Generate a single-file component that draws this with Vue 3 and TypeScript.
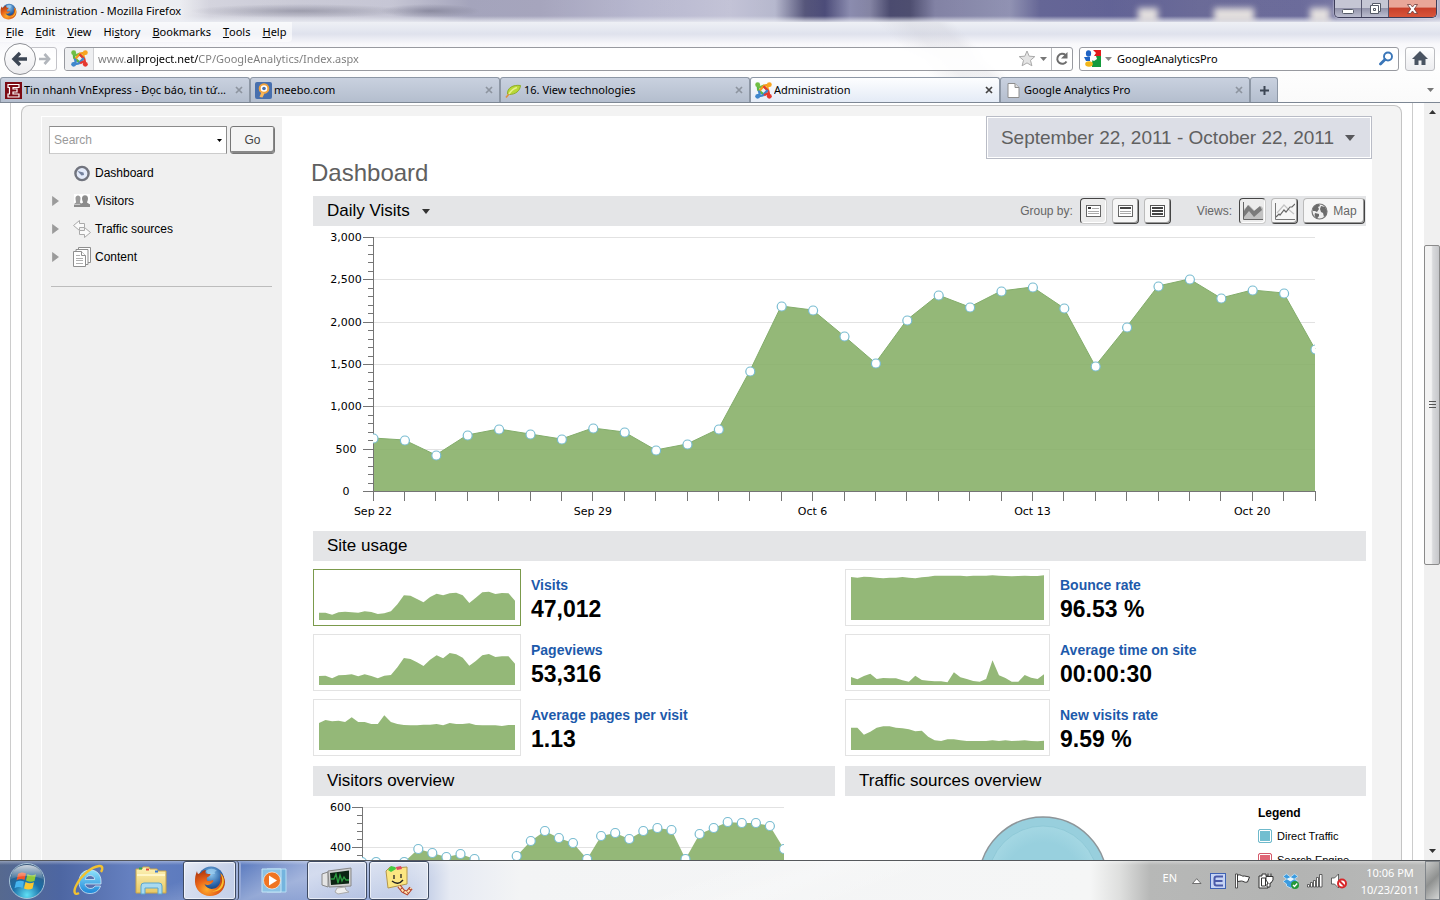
<script setup lang="ts">
import { computed, ref } from 'vue'

interface Tab { title: string; icon: string; active?: boolean }
interface Metric { name: string; value: string; base: number; points: number[]; selected?: boolean }

const menus = [
  ['', 'F', 'ile'], ['', 'E', 'dit'], ['', 'V', 'iew'], ['Hi', 's', 'tory'],
  ['', 'B', 'ookmarks'], ['', 'T', 'ools'], ['', 'H', 'elp'],
]

const tabs: Tab[] = [
  { title: 'Tin nhanh VnExpress - Đọc báo, tin tứ...', icon: 'vn' },
  { title: 'meebo.com', icon: 'meebo' },
  { title: '16. View technologies', icon: 'leaf' },
  { title: 'Administration', icon: 'joomla', active: true },
  { title: 'Google Analytics Pro', icon: 'page' },
]

const nav = [
  { label: 'Dashboard', icon: 'gauge', expandable: false },
  { label: 'Visitors', icon: 'people', expandable: true },
  { label: 'Traffic sources', icon: 'arrows', expandable: true },
  { label: 'Content', icon: 'docs', expandable: true },
]

const url = ref('www.allproject.net/CP/GoogleAnalytics/Index.aspx')
const webSearch = ref('GoogleAnalyticsPro')
const siteSearch = ref('')

const dailyY = [
  212, 214, 229, 209, 203, 208, 213, 202, 206, 224, 218, 203, 145, 80, 84, 110,
  137, 94, 69, 81, 65, 61, 82, 140, 101, 60, 53, 72, 64, 67, 123,
]
const visitorY = [
  66, 66, 75, 66, 53, 57, 61, 58, 63, 80, 80, 60, 45, 35, 42, 47,
  63, 40, 37, 43, 35, 32, 34, 63, 38, 32, 26, 27, 27, 30, 53,
]

function spread(ys: number[], x0: number, x1: number) {
  const step = (x1 - x0) / (ys.length - 1)
  return ys.map((y, i) => ({ x: Math.round((x0 + i * step) * 10) / 10, y }))
}
function areaPath(pts: { x: number; y: number }[], base: number) {
  return `M${pts[0].x},${base} ` + pts.map(p => `L${p.x},${p.y}`).join(' ') + ` L${pts[pts.length - 1].x},${base}Z`
}

const daily = computed(() => spread(dailyY, 60, 1002))
const visitors = computed(() => spread(visitorY, 49, 471))
const dailyLabels = ['3,000', '2,500', '2,000', '1,500', '1,000', '500', '0']
const dailyGrid = [11, 53, 96, 138, 180, 223, 265]
const minorTicks = Array.from({ length: 31 }, (_, i) => Math.round(11 + i * 254 / 30))
const weekLabels = [['Sep 22', 0], ['Sep 29', 7], ['Oct 6', 14], ['Oct 13', 21], ['Oct 20', 28]] as [string, number][]

const metrics: Metric[] = [
  { name: 'Visits', value: '47,012', base: 180, selected: true, points: [158, 158, 164, 157, 155, 157, 158, 154, 156, 162, 160, 154, 133, 106, 107, 117, 127, 111, 101, 106, 100, 98, 106, 129, 113, 97, 95, 102, 99, 100, 122] },
  { name: 'Bounce rate', value: '96.53 %', base: 180, points: [51, 53, 50, 51, 53, 55, 53, 53, 51, 53, 55, 52, 50, 47, 47, 47, 47, 47, 49, 47, 47, 47, 46, 47, 48, 49, 48, 47, 48, 48, 46] },
  { name: 'Pageviews', value: '53,316', base: 375, points: [348, 347, 355, 346, 345, 343, 349, 343, 348, 355, 347, 345, 322, 294, 297, 307, 318, 299, 286, 295, 279, 283, 293, 317, 303, 286, 282, 291, 289, 289, 311] },
  { name: 'Average time on site', value: '00:00:30', base: 375, points: [351, 358, 348, 341, 357, 354, 355, 355, 361, 365, 347, 360, 362, 364, 364, 367, 337, 352, 357, 363, 365, 357, 301, 346, 354, 365, 365, 345, 353, 357, 343] },
  { name: 'Average pages per visit', value: '1.13', base: 570, points: [489, 480, 484, 482, 486, 472, 486, 486, 492, 492, 466, 486, 492, 495, 496, 496, 494, 494, 492, 496, 489, 492, 492, 490, 495, 496, 496, 496, 498, 495, 495] },
  { name: 'New visits rate', value: '9.59 %', base: 570, points: [503, 503, 524, 515, 503, 499, 499, 503, 505, 508, 514, 512, 530, 541, 543, 538, 538, 541, 543, 543, 543, 543, 541, 543, 541, 543, 542, 541, 543, 544, 542] },
]
function spark(m: Metric) {
  return areaPath(spread(m.points.map(p => 45 - Math.round((m.base - p) / 3 * 10) / 10), 0, 196), 45)
}
</script>

<template>
  <div class="screen">
    <svg class="defs" width="0" height="0" aria-hidden="true">
      <defs>
        <radialGradient id="orb" cx=".5" cy=".9" r=".9"><stop offset="0" stop-color="#5fe0f5" /><stop offset=".45" stop-color="#1b6fa8" /><stop offset="1" stop-color="#3b5578" /></radialGradient>
        <linearGradient id="orbTop" x2="0" y2="1"><stop offset="0" stop-color="#fff" stop-opacity=".75" /><stop offset="1" stop-color="#fff" stop-opacity=".1" /></linearGradient>
        <radialGradient id="fox" cx=".4" cy=".75" r=".8"><stop offset="0" stop-color="#ffae2b" /><stop offset=".45" stop-color="#e8641a" /><stop offset="1" stop-color="#a8300c" /></radialGradient>
        <radialGradient id="globe" cx=".5" cy=".3" r=".7"><stop offset="0" stop-color="#8fc8ee" /><stop offset=".6" stop-color="#2a63a8" /><stop offset="1" stop-color="#12305f" /></radialGradient>
        <linearGradient id="ieBlue" x2="0" y2="1"><stop offset="0" stop-color="#8fe2fb" /><stop offset="1" stop-color="#1c86d8" /></linearGradient>
        <linearGradient id="folderY" x2="0" y2="1"><stop offset="0" stop-color="#fdf3b8" /><stop offset="1" stop-color="#e8c864" /></linearGradient>
        <radialGradient id="pieIn" cx=".5" cy=".5" r=".5"><stop offset=".7" stop-color="#98d0de" /><stop offset="1" stop-color="#a4d7e3" /></radialGradient>
        <symbol id="firefox" viewBox="0 0 32 32">
          <circle cx="17" cy="14.5" r="13" fill="url(#globe)" />
          <path d="M12 6c3-3 8-3 11 0-2 0-3 1-2 3-3 0-5 0-6 2-1-2-2-3-3-5z" fill="#9fd2f2" opacity=".7" />
          <path d="M3 6c0 1 .4 2 1 3l3-1c1-2 3-3 5-3-.8 1.300-.8 2.500 0 3.500 1.500.5 3 .6 4.500.6-.3 1.800-1.500 2.400-3.500 3.400-.5 1.500-.2 2.500.5 3.500 2 .4 3.500-.3 5-1 1.300.7 1 2-.2 2.600C16.500 20 13 21 10.500 19c1.500 4.500 7.500 6.500 12 3.500 3.500-2.500 4.500-6 3.500-9.500 1-1 1-3 .2-5C29.500 10 31 13.500 31 17c0 8-6.500 14-15 14C7.500 31 1.200 24.500 1 17 .9 13 1.500 9.500 3 6z" fill="url(#fox)" />
          <path d="M26.200 8c2.500 4.500 2.800 9.500 0 13.500-2 3-5 4.500-8.200 4.700 6.500 1.300 11-3 11.800-8.500.5-3.700-.8-7.200-3.600-9.700z" fill="#fbc02d" />
        </symbol>
        <symbol id="joomla" viewBox="0 0 16 16">
          <g fill="none" stroke-width="2.200" stroke-linejoin="round">
            <path d="M2.500 2.500 3 7.500 8.500 12" stroke="#5ab543" />
            <path d="M2.500 2.500 4.500 5 8 3.500 12 8" stroke="#6fbe44" />
            <path d="M13.500 2.500 8.500 3.500 4 8.500" stroke="#f49b1d" />
            <path d="M13.500 2.500 11.500 5 12.500 8" stroke="#f9a51f" />
            <path d="M13.500 13.500 12.500 8.500 8 4" stroke="#e5382f" />
            <path d="M2.500 13.500 7.500 12.500 12 7.500" stroke="#3f87cd" />
            <path d="M2.500 13.500 4.500 11 3.500 8" stroke="#3f87cd" />
            <path d="M13.500 13.500 11.500 11 8.500 12.500" stroke="#e5382f" />
          </g>
          <circle cx="2.500" cy="2.500" r="2.300" fill="#6fbe44" /><circle cx="13.500" cy="2.500" r="2.300" fill="#f9a51f" />
          <circle cx="13.500" cy="13.500" r="2.300" fill="#e5382f" /><circle cx="2.500" cy="13.500" r="2.300" fill="#3f87cd" />
        </symbol>
      </defs>
    </svg>

    <header class="chrome">
      <div class="titlebar">
        <svg width="17" height="17"><use href="#firefox" /></svg>
        <span class="window-title">Administration - Mozilla Firefox</span>
        <div class="glass-spots" aria-hidden="true"><i /><i class="wide" /><i /></div>
        <div class="window-buttons">
          <button aria-label="Minimize"><svg width="14" height="12"><rect x="1.500" y="6.500" width="11" height="4" rx="1" fill="#fff" stroke="#555a68" /></svg></button>
          <button aria-label="Restore"><svg width="13" height="13"><path d="M3.500 1.500h8v8h-2v2h-8v-8h2z" fill="#fff" stroke="#555a68" /><path d="M3.500 3.500h6v6M4.500 6.500h2v2h-2z" fill="none" stroke="#555a68" /></svg></button>
          <button class="close-window" aria-label="Close"><svg width="13" height="12"><path d="M1.500 1.500h3l2 2.500 2-2.500h3L8.300 6l3.200 4.500h-3l-2-2.500-2 2.500h-3L4.700 6z" fill="#fff" stroke="#6b3a38" stroke-width=".8" /></svg></button>
        </div>
      </div>

      <nav class="menubar" aria-label="Menu">
        <button v-for="m in menus" :key="m[2]">{{ m[0] }}<u>{{ m[1] }}</u>{{ m[2] }}</button>
      </nav>

      <div class="navbar">
        <div class="history">
          <button class="back" aria-label="Back"><svg width="18" height="16"><path d="M9 2 3 8l6 6M3.500 8H16" fill="none" stroke="#3c4654" stroke-width="3.400" /></svg></button>
          <button class="forward" aria-label="Forward"><svg width="13" height="14"><path d="M6.500 2 11 7l-4.500 5M10.500 7H1" fill="none" stroke="#b2b6bc" stroke-width="2.700" /></svg></button>
        </div>
        <div class="urlbar">
          <span class="identity"><svg width="17" height="17"><use href="#joomla" /></svg></span>
          <input v-model="url" class="url" aria-label="Address">
          <button aria-label="Bookmark"><svg width="18" height="17"><path d="M9 1l2.200 5.200 5.600.4-4.300 3.700 1.400 5.500L9 12.900l-4.900 2.900 1.400-5.500L1.200 6.600l5.600-.4z" fill="#e4e4e4" stroke="#aaa" /></svg></button>
          <button aria-label="History list"><svg width="7" height="4"><path d="M0 0h7L3.500 4z" fill="#777" /></svg></button>
          <button class="reload" aria-label="Reload"><svg width="14" height="14"><path d="M11.500 9.500A5 5 0 1 1 10.500 3" fill="none" stroke="#6d6d6d" stroke-width="2" /><path d="M12.500 0v6.500H6z" fill="#6d6d6d" /></svg></button>
        </div>
        <div class="searchbar">
          <svg width="17" height="17"><rect width="17" height="17" fill="#fff" /><path d="M9 0h8v6H9z" fill="#e21b1b" /><path d="M9 6h8v11H8v-4z" fill="#149a3c" /><ellipse cx="4.500" cy="3.500" rx="2.600" ry="3.300" fill="#1e63c4" /><path d="M0 7l6 0 0 4H2z" fill="#1e63c4" /><path d="M7 6h5l1 3-3 2-4-2z" fill="#fff" /><ellipse cx="5" cy="14" rx="3.800" ry="2.800" fill="#f2b71c" /><path d="M9 0l3 3-2 3H8z" fill="#fff" /></svg>
          <button aria-label="Choose engine"><svg width="7" height="4"><path d="M0 0h7L3.500 4z" fill="#888" /></svg></button>
          <input v-model="webSearch" aria-label="Search the web">
          <button aria-label="Search"><svg width="15" height="15"><circle cx="9" cy="5.500" r="4" fill="none" stroke="#3a76b8" stroke-width="1.900" /><path d="M6 8.500 1.500 13" stroke="#3a76b8" stroke-width="2.800" stroke-linecap="round" /></svg></button>
        </div>
        <button class="home" aria-label="Home"><svg width="16" height="15"><path d="M8 0l8 8h-2.500v6H9.500V9.500h-3V14H2.500V8H0z" fill="#4a5462" /></svg></button>
      </div>

      <div class="tabstrip">
        <button v-for="t in tabs" :key="t.title" class="tab" :class="{ active: t.active }">
          <svg v-if="t.icon === 'vn'" width="17" height="17"><rect width="17" height="17" fill="#7c0a14" /><path d="M3 2.500h11v3H8v1.500h4v3H8v2h6v3H3v-3h1.500v-6.500H3z" fill="none" stroke="#fff" stroke-width="1.200" /></svg>
          <svg v-else-if="t.icon === 'meebo'" width="17" height="17"><rect width="17" height="17" rx="2" fill="#476fae" /><circle cx="9" cy="6.500" r="4.300" fill="#fff" stroke="#f2a33c" stroke-width="2" /><circle cx="9" cy="6.500" r="1.800" fill="#476fae" /><path d="M6.500 10 4.500 15l3 .5 2-4z" fill="#f9b75a" /></svg>
          <svg v-else-if="t.icon === 'leaf'" width="17" height="17"><path d="M2.500 12C2 6 8 2.500 15.500 3.500 15 9 10.500 12.500 4 12.500z" fill="#b9d836" stroke="#8fae2c" /><path d="M1 15.500 4 12" fill="none" stroke="#e0903a" stroke-width="1.600" /><path d="M4 12q3-5 8-6.500" fill="none" stroke="#e6f08a" stroke-width="1.500" /></svg>
          <svg v-else-if="t.icon === 'joomla'" width="17" height="17"><use href="#joomla" /></svg>
          <svg v-else width="17" height="17"><path d="M3 1.500h7l4 4v10H3z" fill="#fff" stroke="#8e8e8e" /><path d="M10 1.500v4h4" fill="#ddd" stroke="#8e8e8e" /></svg>
          <span>{{ t.title }}</span>
          <svg class="tab-close" width="8" height="8"><path d="M1 1l6 6M7 1 1 7" :stroke="t.active ? '#444' : '#8d949f'" stroke-width="1.700" /></svg>
        </button>
        <button class="new-tab" aria-label="New tab"><svg width="11" height="11"><path d="M5.500 1v9M1 5.500h9" stroke="#3c4654" stroke-width="2" /></svg></button>
        <button class="all-tabs" aria-label="List all tabs"><svg width="7" height="4"><path d="M0 0h7L3.500 4z" fill="#777" /></svg></button>
      </div>
    </header>

    <div class="viewport">
      <div class="page">
        <div class="shell">
          <aside class="sidebar">
            <form class="search" @submit.prevent>
              <div class="combo">
                <input v-model="siteSearch" placeholder="Search" aria-label="Search reports">
                <button type="button" aria-label="Show suggestions"><svg width="5" height="3"><path d="M0 0h5L2.500 3z" /></svg></button>
              </div>
              <button class="go">Go</button>
            </form>
            <ul class="nav">
              <li v-for="n in nav" :key="n.label">
                <span class="twisty"><svg v-if="n.expandable" width="7" height="10"><path d="M.5 .5v9l6-4.500z" fill="#9b9b9b" stroke="#888" stroke-width=".5" /></svg></span>
                <a href="#">
                  <svg v-if="n.icon === 'gauge'" width="18" height="20"><circle cx="9" cy="10.500" r="6.600" fill="#e4ebfa" stroke="#71747e" stroke-width="2.400" /><path d="M4.500 8 10.500 9.500 11 12 8.500 12.500z" fill="#74829e" /></svg>
                  <svg v-else-if="n.icon === 'people'" width="18" height="20"><rect x="1" y="3" width="16" height="13" fill="#fff" /><path d="M2.500 7c0-3.500 5-3.500 5 0 0 2-.5 3-.5 4.500l2 1.500h-8l2-1.500C3 10 2.500 9 2.500 7z" fill="#9a9a9a" /><path d="M9 7.500c-.3-4.500 6.300-4.500 6 0 0 2-1 3-1 4l3 2v1.500H7V13.500l3-2c0-1-1-2-1-4z" fill="#8c8c8c" /><path d="M1 13.500h16V16H1z" fill="#8c8c8c" /></svg>
                  <svg v-else-if="n.icon === 'arrows'" width="18" height="20"><path d="M6.500 1.500v3h5v4h-5v3l-6-5z" fill="#fafafa" stroke="#aaa" /><path d="M11.500 8.500v3h-5v4h5v3l6-5z" fill="#fafafa" stroke="#aaa" /></svg>
                  <svg v-else width="18" height="20"><g fill="#fff" stroke="#8f8f8f"><path d="M5.500 .5h12v15h-12z" /><path d="M3 2.500h12v15H3z" /><path d="M.5 4.500h8l4 4v11H.5z" /><path d="M8.500 4.500v4h4" /></g><path d="M3 8.500h4M3 11.500h7M3 13.500h7M3 16.500h7" stroke="#b0b0b0" /></svg>
                  {{ n.label }}
                </a>
              </li>
            </ul>
          </aside>

          <main class="report">
            <button class="date-range">September 22, 2011 - October 22, 2011 <svg width="10" height="6"><path d="M0 0h10L5 6z" fill="#58585c" /></svg></button>
            <h1>Dashboard</h1>

            <div class="bar">
              <button class="metric-picker">Daily Visits <svg width="8" height="5"><path d="M0 0h8L4 5z" fill="#333" /></svg></button>
              <div class="tools" role="group" aria-label="Group by">
                <span>Group by:</span>
                <button class="tool on" aria-label="Day"><svg width="15" height="12"><rect x=".5" y=".5" width="14" height="11" fill="#fff" stroke="#666" /><path d="M2 3h3" stroke="#333" stroke-width="2" /><path d="M6 3.500h7M2 6.500h11M2 8.500h11" stroke="#aaa" /></svg></button>
                <button class="tool" aria-label="Week"><svg width="15" height="12"><rect x=".5" y=".5" width="14" height="11" fill="#fff" stroke="#666" /><path d="M2 3h11" stroke="#444" stroke-width="2" /><path d="M2 6.500h11M2 8.500h11" stroke="#aaa" /></svg></button>
                <button class="tool" aria-label="Month"><svg width="15" height="12"><rect x=".5" y=".5" width="14" height="11" fill="#fff" stroke="#555" /><path d="M2 3h11M2 6h11M2 9h11" stroke="#444" stroke-width="2" /></svg></button>
              </div>
              <div class="tools" role="group" aria-label="Views">
                <span>Views:</span>
                <button class="tool on" aria-label="Area chart"><svg width="20" height="18"><path d="M1 17V7l5-4 6 6 6-5 2 2v11z" fill="#c2c2c2" /><path d="M1 9l4-6 6 6 6-5 2 4-8 7-5-6-5 6z" fill="#7b7b7b" /><path d="M.5 0v17.500H20" fill="none" stroke="#666" /></svg></button>
                <button class="tool" aria-label="Line chart"><svg width="20" height="18"><path d="M2 11l7-8 4 4 6 5" fill="none" stroke="#c4c4c4" stroke-width="1.200" /><path d="M1 15l3-3 1 1 4-5 2 2 4-5 2 0 3-3" fill="none" stroke="#666" stroke-width="1.200" /><path d="M.5 1v16.500H20" fill="none" stroke="#777" /></svg></button>
                <button class="tool map"><svg width="17" height="17"><circle cx="8.500" cy="8.500" r="7.500" fill="#eee" stroke="#777" stroke-width="1.200" /><path d="M2 5c2-3 4-4 6-4l1 2-2 1 1 2-2 3-2-1-2 0zM4 10l4 1 0 2-2 2.500c-2-1-3-3-2-5.500zM10 3l4 1 2 4-1 4-2 2-1-4-2-1-1-3z" fill="#6b6b6b" /></svg>Map</button>
              </div>
            </div>

            <svg class="chart" viewBox="0 0 1053 305" role="img" aria-label="Daily visits">
              <path v-for="y in dailyGrid.slice(0, 6)" :key="y" :d="`M60 ${y}.5H1002`" stroke="#e2e2e2" />
              <path :d="areaPath(daily, 265)" fill="#84ad64" fill-opacity=".87" />
              <polyline :points="daily.map(p => `${p.x},${p.y}`).join(' ')" fill="none" stroke="#83ad6b" />
              <g stroke="#757575">
                <path d="M60.500 11V265M50 265.500H1002" />
                <path v-for="y in minorTicks" :key="y" :d="`M55 ${y}.5H60`" />
                <path v-for="y in dailyGrid" :key="y" :d="`M50 ${y}.5H60`" />
                <path v-for="p in daily" :key="p.x" :d="`M${Math.floor(p.x)}.5 265V275`" />
              </g>
              <clipPath id="dailyClip"><rect x="60" y="0" width="942" height="300" /></clipPath>
              <g clip-path="url(#dailyClip)" fill="#fff" stroke="#79bcd1" stroke-width="1.200">
                <circle v-for="p in daily" :key="p.x" :cx="p.x + .5" :cy="p.y + .5" r="4.500" />
              </g>
              <text v-for="(l, i) in dailyLabels" :key="l" x="33" :y="dailyGrid[i] + 4" text-anchor="middle">{{ l }}</text>
              <text v-for="[l, i] in weekLabels" :key="l" :x="daily[i].x" y="289" text-anchor="middle">{{ l }}</text>
            </svg>

            <h2 class="bar">Site usage</h2>
            <div class="metrics">
              <a v-for="m in metrics" :key="m.name" href="#" class="metric">
                <span class="thumb" :class="{ selected: m.selected }">
                  <svg viewBox="0 0 196 45" preserveAspectRatio="none" aria-hidden="true"><path :d="spark(m)" fill="#94b878" /></svg>
                </span>
                <span class="figures"><b>{{ m.name }}</b><strong>{{ m.value }}</strong></span>
              </a>
            </div>

            <div class="overviews">
              <section>
                <h2 class="bar">Visitors overview</h2>
                <svg class="chart" viewBox="0 0 522 140" role="img" aria-label="Visitors overview">
                  <path d="M49 11.500H471M49 51.500H471M49 91.500H471" stroke="#e2e2e2" />
                  <path :d="areaPath(visitors, 131)" fill="#84ad64" fill-opacity=".87" />
                  <g stroke="#757575">
                    <path d="M49.500 11V131M39 11.500H49M39 51.500H49M39 91.500H49" />
                    <path v-for="i in 14" :key="i" :d="`M44 ${11 + i * 8}.5H49`" />
                  </g>
                  <clipPath id="visitorClip"><rect x="49" y="0" width="422" height="140" /></clipPath>
                  <g clip-path="url(#visitorClip)" fill="#fff" stroke="#79bcd1" stroke-width="1.200">
                    <circle v-for="p in visitors" :key="p.x" :cx="p.x" :cy="p.y" r="4.500" />
                  </g>
                  <text x="17" y="15">600</text><text x="17" y="55">400</text>
                </svg>
              </section>
              <section>
                <h2 class="bar">Traffic sources overview</h2>
                <div class="sources">
                  <svg viewBox="0 0 413 160" role="img" aria-label="Traffic sources">
                    <circle cx="198" cy="85" r="64" fill="#98cfdd" stroke="#8d9599" stroke-width="1.500" />
                    <circle cx="198" cy="85" r="55" fill="url(#pieIn)" stroke="#88c4d3" stroke-width=".7" />
                  </svg>
                  <div class="legend">
                    <b>Legend</b>
                    <span class="direct"><i />Direct Traffic</span>
                    <span class="engine"><i />Search Engine</span>
                  </div>
                </div>
              </section>
            </div>
          </main>
        </div>
      </div>

      <div class="scrollbar" aria-hidden="true">
        <svg width="7" height="4"><path d="M0 4h7L3.500 0z" fill="#333" /></svg>
        <div class="track"><div class="thumb-bar"><svg width="7" height="8"><path d="M0 .5h7M0 3.500h7M0 6.500h7" stroke="#555" /></svg></div></div>
        <svg width="7" height="4"><path d="M0 0h7L3.500 4z" fill="#333" /></svg>
      </div>
    </div>

    <footer class="taskbar">
      <button class="task start" aria-label="Start">
        <svg width="38" height="38"><circle cx="19" cy="19" r="17.500" fill="url(#orb)" stroke="#a8c4d8" />
          <path d="M10 12c3-2 5-2 8-.5l-1.500 6.500c-2.500-1.300-5-1.300-8 .3z" fill="#f0562a" /><path d="M19.500 12c3 1.500 5.500 1.500 8.500.3L26.500 19c-3 1.300-5.500 1-8.500-.5z" fill="#8fc93a" /><path d="M8 19.800c3-1.500 5.500-1.500 8-.2L14.500 26c-2.500-1.300-5-1.300-8 .2z" fill="#46b4ee" /><path d="M17.500 20c3 1.500 5.500 1.500 8.500.3l-1.500 6.300c-3 1.300-5.500 1.200-8.500-.2z" fill="#fbc72e" />
          <path d="M3 17C3 8 10 3 19 3s16 5 16 14c-10-4-22-4-32 0z" fill="url(#orbTop)" />
        </svg>
      </button>
      <button class="task quick" aria-label="Internet Explorer">
        <svg width="34" height="34"><path d="M7 18C7 10 12 6 18.500 6S29 11 29 17v3H13c.5 5 8 6 10 2h5.500c-1.500 5-5.500 7.500-10.500 7.500C11.500 29.500 7 25 7 18zm6.300-2.500h9.400c0-5-8.700-5.500-9.400 0z" fill="url(#ieBlue)" stroke="#e4f6ff" stroke-width=".7" /><path d="M7 29c-5 3-6-2-2-9C9 12 19 3 27 2c4-.5 4 3 2 6" fill="none" stroke="#f2c230" stroke-width="2.400" /></svg>
      </button>
      <button class="task quick" aria-label="Explorer">
        <svg width="34" height="32"><path d="M2 4h6l1-2h6l1 2h7l1 2h8v22H2z" fill="url(#folderY)" stroke="#c9a54a" /><path d="M5 3.500h3" stroke="#35a84a" stroke-width="2" /><path d="M12 4.500h3" stroke="#e04a3a" stroke-width="2" /><path d="M21 6.500h3" stroke="#3a78d0" stroke-width="2" /><path d="M3 10h28" stroke="#fff6c8" stroke-width="2" /><path d="M7 29V21q0-3 3-3h15q3 0 3 3v8h-4v-6H11v6z" fill="#a9daf0" stroke="#5aa6cf" /></svg>
      </button>
      <button class="task open stacked" aria-label="Firefox"><svg width="32" height="32"><use href="#firefox" /></svg></button>
      <button class="task quick media" aria-label="Media Player">
        <svg width="28" height="26"><path d="M6 1h19v23H6z" fill="#74b4de" stroke="#b6def4" /><path d="M1 1h19v23H1z" fill="#8cc2e4" stroke="#c3e4f6" /><circle cx="11" cy="12.500" r="8.500" fill="#ef7422" stroke="#fff" stroke-width=".6" /><path d="M8 7.500v10l8-5z" fill="#fff" /></svg>
      </button>
      <button class="task open" aria-label="Task Manager">
        <svg width="32" height="30"><path d="M1 8l6-2v15l-6-2z" fill="#e4e4e4" stroke="#888" /><path d="M7 5 30 2v18L8 21z" fill="#cfcfcf" stroke="#888" /><path d="M9 7l19-2.500V17.500L10 19z" fill="#0b2413" /><path d="M10 13h3l2-5 2 9 2-8 2 6 2-4 2 3h3" fill="none" stroke="#2a9a3e" stroke-width="1.300" /><path d="M16 22l8-1 1 3 3 2-11 2-3-2z" fill="#eee" stroke="#aaa" /></svg>
      </button>
      <button class="task open smile" aria-label="Folder Guard">
        <svg width="32" height="34"><path d="M3 7l4-4 5 1 12-1v17L5 24z" fill="#fbe682" stroke="#b4964a" /><path d="M5 6l3-4 4 1 1 2-5 3z" fill="#42cc40" /><path d="M13 3l5-1 1 3-5 1z" fill="#e04860" /><path d="M11 11v4M18 10v4M9 17q6 5 11-1" fill="none" stroke="#222" stroke-width="1.300" /><path d="M16 22l4 5 4 2 4-5" fill="none" stroke="#b5402a" stroke-width="4" /><path d="M16 22l4 5 4 2 4-5" fill="none" stroke="#ffe4b0" stroke-width="2" stroke-dasharray="3 1" /></svg>
      </button>

      <div class="tray">
        <span class="lang">EN</span>
        <svg width="10" height="6"><path d="M.5 5.500h8.500L4.700 .7z" fill="#fff" stroke="#555" stroke-width=".8" /></svg>
        <svg width="16" height="16"><rect x=".5" y=".5" width="15" height="15" fill="#c6d4f4" stroke="#3f62b4" /><path d="M13 3.500H6.500Q4.500 3.500 4.500 5.500v5q0 2 2 2H13M4.500 8h8" fill="none" stroke="#4a5aa8" stroke-width="2" /></svg>
        <svg width="16" height="16"><path d="M1.500 1h2v14h-2z" fill="#fff" stroke="#333" stroke-width=".8" /><path d="M3.500 2c4-1 4 2 7 1l5 1-2 5c-3 1-4-1-6-1l-4 .5z" fill="#fff" stroke="#333" /></svg>
        <svg width="16" height="16"><path d="M1 3h3V1h4v2h2v12H1z" fill="#fff" stroke="#333" /><path d="M3.500 5h4v8h-4z" fill="none" stroke="#333" /><path d="M8 3.500h7V7l-2 3h-1v4H9v-3h1V10L8 7zM10 3.500v-3M13 3.500v-3" fill="#fff" stroke="#333" /></svg>
        <svg width="17" height="16"><path d="M4.500 1 8.500 4l4-3L16 3.500 12.500 6 16 8.500 12.500 11v2l-4 2-4-2v-2L1 8.500 4.500 6 1 3.500z" fill="#3b9be0" stroke="#d3ecfb" stroke-width=".7" /><path d="M4.500 6l4-2 4 2-4 2.500z" fill="#e6f5fe" /><circle cx="13" cy="12" r="4" fill="#25983a" /><path d="M11 12l1.500 1.500L15.200 10.500" fill="none" stroke="#fff" stroke-width="1.300" /></svg>
        <svg width="16" height="14"><g fill="#fff" stroke="#444" stroke-width=".8"><path d="M.5 10.500h2v2.500h-2zM3.500 8.500h2v4.500h-2zM6.500 6.500h2v6.500h-2zM9.500 3.500h2v9.500h-2zM12.500 .5h2.500v12.500h-2.500z" /></g></svg>
        <svg width="16" height="16"><path d="M.5 5h3l4-4v14l-4-4h-3z" fill="#fff" stroke="#444" stroke-width=".8" /><circle cx="11" cy="10.500" r="4" fill="#fff" stroke="#d8272a" stroke-width="2" /><path d="M8.500 8l5 5" stroke="#d8272a" stroke-width="2" /></svg>
        <time>10:06 PM<br>10/23/2011</time>
        <button class="show-desktop" aria-label="Show desktop" />
      </div>
    </footer>
  </div>
</template>

<style>
body { margin: 0; overflow: hidden; }
</style>

<style scoped>
.screen { display: flex; flex-direction: column; height: 100vh; overflow: hidden; background: #fff; color: #000; font: 12px/16px "Liberation Sans", Arial, sans-serif; }
.screen * { box-sizing: border-box; }
.defs { position: absolute; }
button { margin: 0; padding: 0; border: 0; background: none; color: inherit; font: inherit; display: inline-flex; align-items: center; justify-content: center; }
input { margin: 0; padding: 0; border: 0; background: none; color: inherit; font: inherit; min-width: 0; outline: none; }
a { color: inherit; text-decoration: none; }
svg { display: block; flex: none; }
h1, h2 { margin: 0; font-weight: normal; }

/* browser window */
.chrome { flex: none; font: 11px/16px "Noto Sans", "Open Sans", sans-serif;
  background:
    linear-gradient(45deg, transparent 62%, rgba(190,190,198,.22) 64%, rgba(200,200,208,.25) 66%, transparent 67%),
    linear-gradient(#fff 0, #eceef4 24px, #dfe2ed 34px, #f8f8fb 44px, #fff 60px, #fafafa 100%); }
.titlebar { display: flex; align-items: center; gap: 4px; height: 22px; overflow: hidden;
  background:
    linear-gradient(rgba(255,255,255,.1) 0 16px, rgba(236,238,244,.85) 22px),
    radial-gradient(ellipse 110px 7px at 300px 11px, rgba(105,105,125,.55), transparent),
    radial-gradient(ellipse 50px 7px at 430px 11px, rgba(95,95,120,.6), transparent),
    linear-gradient(90deg, #eceef2 0, #eaebf0 180px, #cfcfda 210px, #c4c4d2 300px, #c0c0d0 390px, #9a9ab4 470px, #9c9bb6 540px, #b0b0ca 640px, #bcbcd2 730px, #aeb0c8 775px, #43436c 805px, #38386a 825px, #7e7fa6 850px, #767699 870px, #37375f 890px, #3a3a60 910px, #74749a 935px, #8486aa 1010px, #54558a 1040px, #50518a 1110px, #5a5a8c 1200px, #5b5b90 1300px, #7f7fa8 1400px, #a9a9c4 100%); }
.window-title { text-shadow: 0 0 6px #fff, 0 0 8px #fff; white-space: nowrap; }
.glass-spots { display: flex; align-items: center; gap: 56px; height: 22px; padding-top: 8px; margin-left: auto; filter: blur(3px); }
.glass-spots i { width: 20px; height: 14px; background: #f1ece6; opacity: .9; }
.glass-spots .wide { width: 40px; }
.window-buttons { display: flex; align-self: flex-start; height: 18px; margin-right: 3px; border: 1px solid #3c3c58; border-top: 0; border-radius: 0 0 5px 5px; overflow: hidden; box-shadow: 0 0 2px #fff; }
.window-buttons button { width: 27px; border-right: 1px solid #55556e; background: linear-gradient(#c5c6d4 0 45%, #9293aa 50%, #bcbdd0); }
.window-buttons .close-window { width: 47px; border: 0; background: linear-gradient(#e9a698 0 40%, #c8402b 50%, #d9553a); }
.menubar { display: flex; gap: 12px; width: max-content; height: 20px; padding: 0 6px; align-items: center; background: rgba(255,255,255,.6); border-radius: 0 0 4px 0; }
.navbar { display: flex; align-items: center; gap: 6px; height: 33px; padding: 0 5px 0 4px; }
.history { display: flex; align-items: center; margin-right: 1px; }
.back { width: 32px; height: 32px; border: 1px solid #8e9095; border-radius: 50%; background: linear-gradient(#fff, #ececef); z-index: 1; }
.forward { width: 26px; height: 24px; margin-left: -5px; border: 1px solid #c3c3c8; border-radius: 0 3px 3px 0; background: rgba(255,255,255,.6); }
.urlbar, .searchbar { display: flex; align-items: center; height: 24px; border: 1px solid #989aa0; border-radius: 3px; background: rgba(255,255,255,.85); }
.urlbar { flex: 1; gap: 4px; }
.identity { display: flex; align-items: center; justify-content: center; align-self: stretch; width: 29px; border-right: 1px solid #cfd0d3; background: #eeeff1; border-radius: 2px 0 0 2px; }
.url { flex: 1; height: 18px; color: transparent; background: linear-gradient(90deg, #7a7a7a 0 29px, #000 29px 100px, #7a7a7a 100px); background-clip: text; -webkit-background-clip: text; }
.reload { align-self: stretch; width: 21px; border-left: 1px solid #b9babd; }
.searchbar { width: 320px; padding: 0 4px; gap: 4px; }
.searchbar input { flex: 1; margin-left: 1px; }
.home { width: 30px; height: 24px; border: 1px solid #bcbdc1; border-radius: 3px; background: linear-gradient(#fff, #ededf0); }
.tabstrip { display: flex; height: 28px; padding-top: 2px; border-bottom: 1px solid #7d8794; }
.tab { flex: 0 1 250px; min-width: 0; padding: 0 6px 0 4px; gap: 2px; border: 1px solid #8d97a5; border-bottom: 0; border-radius: 3px 3px 0 0; background: linear-gradient(#c9d1df, #b4bece); white-space: nowrap; }
.tab.active { background: linear-gradient(#fdfeff, #e4ebf6); }
.tab span { flex: 1; text-align: left; overflow: hidden; }
.new-tab { width: 28px; border: 1px solid #8d97a5; border-bottom: 0; border-radius: 3px 3px 0 0; background: linear-gradient(#c9d1df, #b4bece); }
.all-tabs { margin-left: auto; width: 20px; }

/* page */
.viewport { flex: 1; display: flex; min-height: 0; overflow: hidden; }
.page { flex: 1; min-width: 0; height: max-content; margin: 0 11px 0 10px; padding: 2px 10px 0; border: solid #ccc; border-width: 0 1px; }
.shell { display: flex; padding: 10px 29px 0 19px; border: 1px solid #c4c4c4; border-bottom: 0; border-radius: 8px 8px 0 0; background: #f3f3f3; }
.sidebar { flex: none; width: 241px; padding: 9px 7px 0 7px; border: solid #fff; border-width: 1px 0 0 1px; background: #f0f0f0; }
.search { display: flex; gap: 3px; height: 28px; }
.combo { display: flex; flex: 1; min-width: 0; padding-left: 4px; border: 1px solid #8b8b8b; border-left-color: #bbb; border-bottom-color: #ccc; background: #fff; }
.combo input { flex: 1; }
.combo input::placeholder { color: #9a9a9a; opacity: 1; }
.combo button { width: 13px; }
.go { width: 45px; border: 1px solid #777; border-radius: 3px; background: #f4f4f4; box-shadow: inset -1px -2px 0 #888; color: #444; }
.nav { list-style: none; margin: 5px 3px 0 2px; padding: 0 0 15px; border-bottom: 1px solid #bcbcbc; }
.nav li { display: flex; align-items: center; height: 28px; }
.nav a { display: flex; align-items: center; gap: 4px; }
.twisty { width: 22px; padding-left: 1px; }
.report { flex: 1; min-width: 0; display: flex; flex-direction: column; padding: 0 6px 0 31px; background: #fff; }
.date-range { align-self: flex-end; gap: 11px; height: 43px; margin-right: -6px; padding: 0 16px 0 14px; border: 1px solid #b9bcc6; box-shadow: inset 0 0 0 1px #fff; background: #dcdee6; color: #606060; font-size: 19px; white-space: nowrap; }
h1 { height: 37px; margin-left: -2px; color: #606060; font-size: 24px; line-height: 28px; }
.bar { display: flex; align-items: center; height: 30px; padding: 0 1px 0 14px; background: #e4e5e7; font-size: 17px; line-height: 20px; white-space: nowrap; }
.metric-picker { gap: 12px; margin-right: auto; }
.tools { display: flex; align-items: center; gap: 5px; margin-left: 26px; color: #666; font-size: 12px; }
.tools span { margin-right: 2px; }
.tool { width: 27px; height: 26px; border: 1px solid #bbb; border-right-color: #444; border-bottom-color: #444; border-radius: 4px; box-shadow: inset -1px -1px 0 #999; background: #f6f6f6; }
.tool.on { border-color: #444 #ccc #ccc #444; box-shadow: inset -1px -1px 0 #fff; background: #ececec; }
.tool.map { width: 62px; gap: 5px; }
.chart { width: 100%; height: auto; }
.chart text { font: 11px "DejaVu Sans", Verdana, sans-serif; }
.metrics { display: grid; grid-template-columns: 532fr 521fr; gap: 8px 0; padding: 8px 0 10px; }
.metric { display: flex; gap: 10px; }
.thumb { display: block; width: 208px; height: 57px; padding: 5px; border: 1px solid #e3e3e3; }
.metric:nth-child(even) .thumb { width: 205px; }
.thumb.selected { border-color: #7b9a4c; }
.thumb svg { width: 100%; height: 45px; }
.figures b { display: block; margin-top: 8px; color: #1d5aab; font-size: 14px; line-height: 16px; }
.figures strong { display: block; font-size: 23px; line-height: 32px; }
.overviews { display: grid; grid-template-columns: 522fr 521fr; gap: 10px; }
.sources { display: flex; }
.sources > svg { flex: 1; min-width: 0; }
.legend { display: flex; flex-direction: column; gap: 8px; width: 108px; padding-top: 10px; }
.legend b { line-height: 14px; }
.legend span { display: flex; align-items: center; gap: 5px; font-size: 11px; line-height: 16px; white-space: nowrap; }
.legend i { width: 14px; height: 14px; border: 1px solid; border-radius: 2px; box-shadow: inset 0 0 0 1px #fff; }
.legend .direct i { border-color: #6fb9cb; background: #72bed0; }
.legend .engine i { border-color: #d45a6a; background: #df6676; }
.scrollbar { flex: none; display: flex; flex-direction: column; align-items: center; width: 16px; padding: 7px 0; background: #f0f0f0; }
.track { flex: 1; width: 100%; padding-top: 131px; }
.thumb-bar { display: flex; align-items: center; justify-content: center; height: 53%; border: 1px solid #8b8b8b; border-radius: 2px; background: linear-gradient(90deg, #f3f3f3 0 45%, #d9dadc 55%, #c6c7ca); }

/* taskbar */
.taskbar { flex: none; display: flex; align-items: center; height: 40px; border-top: 1px solid #55585c; font: 11px/16px "Noto Sans", "Open Sans", sans-serif;
  background:
    linear-gradient(rgba(255,255,255,.35), transparent 4px),
    linear-gradient(160deg, transparent 80px, rgba(255,255,255,.35) 120px, transparent 165px, transparent 250px, rgba(255,255,255,.2) 290px, transparent 330px),
    linear-gradient(90deg, #56698f 0, #4d66a2 60px, #6580c0 130px, #5576bd 240px, #7891cc 310px, #a0b2da 400px, #e6eaf3 450px, #f3f4f5 520px, #f5f6f6 1090px, #dedfde 1120px, #b7b8b7 1150px, #b3b4b3 1300px, #b9bab9 100%); }
.task { flex: none; height: 39px; }
.start { width: 54px; padding: 0 8px; }
.quick { width: 62px; margin-left: 4px; }
.quick + .quick { margin-left: 0; }
.open { width: 60px; border: 1px solid #3e4a62; border-radius: 3px; background: linear-gradient(135deg, rgba(255,255,255,.55), rgba(255,255,255,.3)); box-shadow: inset 0 0 0 1px rgba(255,255,255,.6); }
.stacked { width: 53px; margin-left: 1px; margin-right: 4px; background: linear-gradient(135deg, rgba(255,255,255,.85), rgba(255,255,255,.5)); box-shadow: inset 0 0 0 1px rgba(255,255,255,.6), 2px 0 0 #9fb0d8, 3px 0 0 #3e4a62, 5px 0 0 #93a7d6; }
.media { margin-right: 1px; }
.smile { margin-left: 2px; }
.tray { display: flex; align-items: center; gap: 8px; height: 100%; margin-left: auto; color: #fff; }
.lang { align-self: flex-start; margin-right: 7px; padding-top: 9px; }
.tray time { width: 66px; margin-left: 2px; text-align: center; line-height: 17px; }
.show-desktop { width: 15px; height: 39px; margin-left: -6px; border: 1px solid #80858a; background: linear-gradient(135deg, #c8c9c8, #8f9190 50%, #d4d5d4); }
</style>
